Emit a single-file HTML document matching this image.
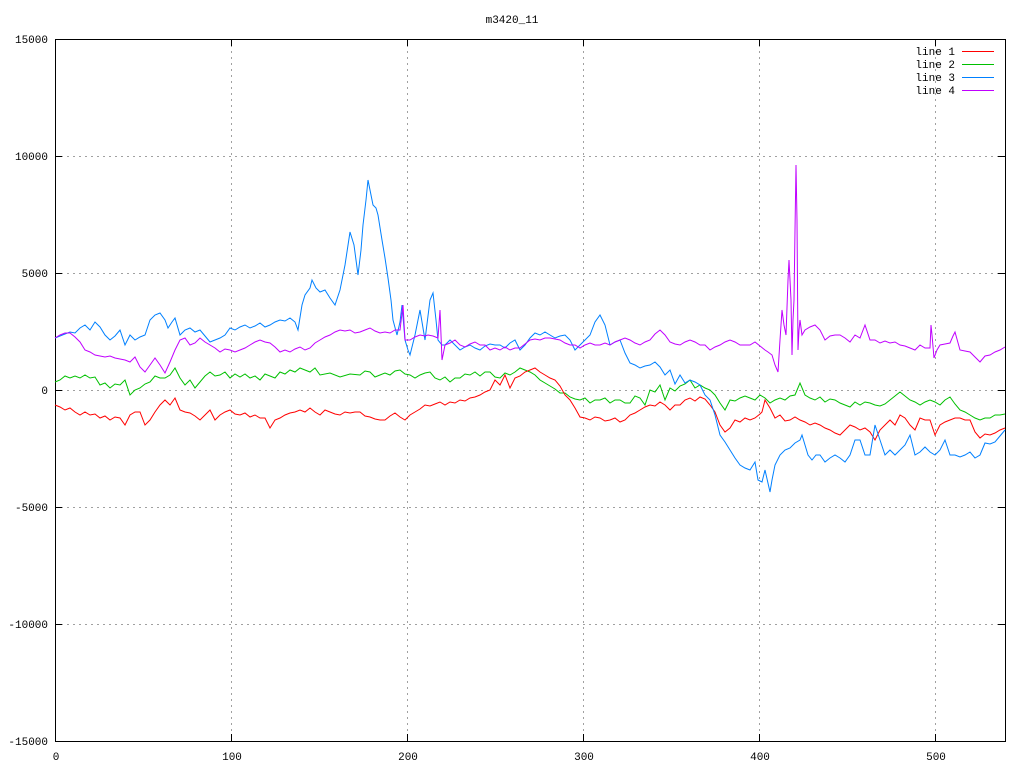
<!DOCTYPE html>
<html><head><style>html,body{margin:0;padding:0;background:#fff}svg{display:block}text{font-family:"Liberation Mono","DejaVu Sans Mono",monospace;font-size:11px;fill:#000}</style></head><body>
<svg width="1024" height="768" viewBox="0 0 1024 768" xmlns="http://www.w3.org/2000/svg">
<rect width="1024" height="768" fill="#fff"/>
<g stroke="#a0a0a0" stroke-width="1" stroke-dasharray="2,4" shape-rendering="crispEdges">
<line x1="55" y1="156.5" x2="1005" y2="156.5"/><line x1="55" y1="273.5" x2="1005" y2="273.5"/><line x1="55" y1="390.5" x2="1005" y2="390.5"/><line x1="55" y1="507.5" x2="1005" y2="507.5"/><line x1="55" y1="624.5" x2="1005" y2="624.5"/>
<line x1="231.5" y1="39" x2="231.5" y2="741"/><line x1="407.5" y1="39" x2="407.5" y2="741"/><line x1="583.5" y1="39" x2="583.5" y2="741"/><line x1="759.5" y1="39" x2="759.5" y2="741"/><line x1="935.5" y1="39" x2="935.5" y2="741"/>
</g>
<g stroke="#000" stroke-width="1" shape-rendering="crispEdges" fill="none">
<rect x="55.5" y="39.5" width="950" height="702"/>
<path d="M55 156.5h7M55 273.5h7M55 390.5h7M55 507.5h7M55 624.5h7M1005 156.5h-7M1005 273.5h-7M1005 390.5h-7M1005 507.5h-7M1005 624.5h-7M231.5 741v-7M407.5 741v-7M583.5 741v-7M759.5 741v-7M935.5 741v-7M231.5 39v7M407.5 39v7M583.5 39v7M759.5 39v7M935.5 39v7"/>
</g>
<g text-anchor="end">
<text x="48" y="43">15000</text><text x="48" y="160">10000</text><text x="48" y="277">5000</text><text x="48" y="394">0</text><text x="48" y="511">-5000</text><text x="48" y="628">-10000</text><text x="48" y="745">-15000</text>
</g>
<g text-anchor="middle">
<text x="56" y="760">0</text><text x="232" y="760">100</text><text x="408" y="760">200</text><text x="584" y="760">300</text><text x="760" y="760">400</text><text x="936" y="760">500</text>
<text x="512" y="23">m3420_11</text>
</g>
<g text-anchor="end">
<text x="955" y="55">line 1</text><text x="955" y="68">line 2</text><text x="955" y="81">line 3</text><text x="955" y="94">line 4</text>
</g>
<g stroke-width="1" fill="none">
<path d="M962 51.5h32" stroke="#f00"/><path d="M962 64.5h32" stroke="#00c000"/><path d="M962 77.5h32" stroke="#0080ff"/><path d="M962 90.5h32" stroke="#c000ff"/>
</g>
<g fill="none" stroke-width="1" stroke-linejoin="miter">
<polyline stroke="#00c000" points="55,382 60,380 65,376 70,378 75,376 80,378 85,375 90,378 95,377 100,385 105,383 110,388 115,384 120,385 125,380 130,395 135,390 140,388 145,384 150,382 155,376 160,378 165,378 170,375 175,368 180,378 185,385 190,380 195,388 200,382 205,376 210,372 215,376 220,375 225,372 230,378 235,374 240,377 245,374 250,378 255,376 260,380 265,374 270,376 275,378 280,372 285,374 290,370 295,372 300,368 305,370 310,372 315,368 320,375 330,373 340,377 350,374 360,375 365,371 370,372 375,377 380,375 385,373 390,375 395,371 400,370 405,374 410,375 415,378 420,375 425,373 430,372 435,378 440,380 445,377 450,382 455,378 460,378 465,374 470,375 475,372 480,376 485,372 490,372 495,377 500,378 505,373 510,375 515,372 520,368 525,370 530,372 535,375 540,380 545,383 550,386 555,389 560,393 565,393 570,397 575,399 580,400 585,398 590,403 595,400 600,400 605,398 610,403 615,400 620,400 625,403 630,403 635,396 640,398 645,405 650,390 655,392 660,385 665,400 670,388 675,391 680,386 685,384 690,380 695,388 700,385 705,388 710,390 715,395 720,403 725,410 730,400 735,401 740,398 745,396 750,398 755,400 760,395 765,398 770,403 775,400 780,398 785,400 790,396 795,395 800,383 805,395 810,398 815,400 820,397 825,402 830,399 835,400 840,403 845,405 850,407 855,402 860,405 865,402 870,403 875,405 880,406 885,404 890,400 895,396 900,392 905,396 910,400 915,402 920,405 925,402 930,400 935,402 940,405 945,400 950,397 955,404 960,410 965,412 970,415 975,418 980,420 985,418 990,418 995,415 1000,415 1005,414"/>
<polyline stroke="#f00" points="55,405 60,407 65,410 70,408 75,412 80,415 85,412 90,415 95,414 100,418 105,416 110,420 115,417 120,418 125,425 130,415 135,412 140,412 145,425 150,420 155,412 160,405 165,400 170,405 175,398 180,410 185,412 190,413 195,416 200,420 205,415 210,410 215,420 220,415 225,412 230,410 235,414 240,415 245,413 250,417 255,415 260,418 265,418 270,428 275,420 280,418 285,415 290,413 295,412 300,410 305,412 310,408 315,412 320,415 325,410 330,412 335,414 340,415 345,412 350,413 355,412 360,412 365,416 370,417 375,419 380,420 385,420 390,416 395,413 400,417 405,420 410,415 415,412 420,409 425,405 430,406 435,404 440,402 445,405 450,402 455,403 460,400 465,401 470,398 475,397 480,395 485,392 490,390 495,380 500,385 505,375 510,388 515,378 520,376 525,372 530,370 535,368 540,372 545,375 550,378 555,380 560,386 565,395 570,400 575,408 580,417 585,418 590,420 595,417 600,418 605,421 610,420 615,418 620,422 625,420 630,415 635,413 640,410 645,407 650,405 655,406 660,402 665,405 670,410 675,405 680,405 685,400 690,398 695,401 700,397 705,399 710,405 715,412 720,425 725,432 730,428 735,420 740,422 745,418 750,420 755,418 760,414 762,412 765,400 770,408 775,418 780,415 785,421 790,420 795,417 800,420 805,422 810,425 815,423 820,425 825,428 830,430 835,433 840,435 845,430 850,425 855,427 860,430 865,428 870,432 875,440 880,430 885,425 890,420 895,425 900,415 905,418 910,425 915,430 920,418 925,420 930,420 935,435 940,425 945,422 950,420 955,418 960,418 965,420 970,420 975,432 980,438 985,434 990,435 995,433 1000,430 1005,428"/>
<polyline stroke="#0080ff" points="55,338 60,336 65,334 70,332 75,333 80,328 85,325 90,330 95,322 100,327 105,335 110,340 115,336 120,330 125,345 130,335 135,340 140,337 145,335 150,320 155,315 160,313 165,320 168,328 172,322 175,318 180,335 185,330 190,328 195,332 200,330 205,336 210,342 215,340 220,338 225,335 230,328 235,330 240,327 245,325 250,328 255,326 260,323 265,327 270,325 275,322 280,320 285,321 290,318 295,322 298,330 302,305 305,295 310,288 312,280 316,288 320,292 325,290 330,298 335,305 340,290 345,265 350,232 354,245 356,260 358,275 361,250 363,225 366,200 368,180 371,195 373,205 376,208 378,215 382,240 385,258 388,278 391,300 393,320 397,335 400,322 402,305 405,340 408,350 410,355 415,335 420,310 425,340 430,300 433,293 436,320 438,340 442,345 445,345 450,340 455,345 460,350 465,347 470,345 475,348 480,350 485,346 490,344 495,345 500,345 505,348 510,343 515,340 520,350 525,345 530,338 535,333 540,335 545,332 550,335 555,338 560,336 565,335 570,340 575,350 580,345 585,340 590,335 595,322 600,315 605,325 610,345 615,342 620,340 625,353 630,363 635,365 640,368 645,366 650,365 655,362 660,367 665,375 670,370 675,384 680,375 685,383 690,380 695,382 700,385 705,395 710,400 715,415 720,435 725,442 730,450 735,458 740,465 745,468 750,470 755,462 758,480 762,482 765,470 770,492 772,480 775,465 780,455 785,450 790,448 795,443 800,440 802,435 805,445 808,455 812,460 816,455 820,455 825,462 830,458 835,455 840,458 845,462 850,455 855,440 860,440 865,455 870,455 875,425 880,440 885,455 890,450 895,455 900,450 905,445 910,435 915,455 920,452 925,447 930,452 935,455 940,450 945,440 950,455 955,455 960,457 965,455 970,452 975,458 980,455 985,443 990,444 995,442 1000,436 1005,430"/>
<polyline stroke="#c000ff" points="55,338 60,335 65,333 70,333 75,337 80,342 85,350 90,352 95,355 100,356 105,357 110,356 115,358 120,359 125,360 130,362 135,357 140,367 145,372 150,365 155,358 160,365 165,373 170,362 175,350 180,340 185,338 190,345 195,343 200,338 205,342 210,345 215,348 220,352 225,349 230,350 235,352 240,350 245,348 250,345 255,342 260,340 265,342 270,343 275,347 280,352 285,350 290,352 295,349 300,347 305,350 310,348 315,343 320,340 325,337 330,335 335,332 340,330 345,331 350,330 355,333 360,332 365,330 370,328 375,331 380,333 385,332 390,333 395,330 400,330 403,305 405,340 410,340 415,337 420,335 425,336 428,335 433,336 438,338 440,310 442,360 445,345 450,343 455,340 460,345 465,347 470,344 475,342 480,345 485,345 490,350 495,348 500,350 505,347 510,350 515,348 520,348 525,344 530,340 535,339 540,340 545,338 550,338 555,339 560,340 565,343 570,345 575,345 580,348 585,345 590,343 595,345 600,345 605,343 610,345 615,342 620,340 625,338 630,340 635,343 640,345 645,342 650,340 655,334 660,330 665,335 670,342 675,344 680,345 685,342 690,340 695,342 700,345 705,345 710,350 715,347 720,345 725,342 730,340 735,342 740,345 745,345 750,345 755,342 760,346 765,350 768,352 772,355 775,365 778,372 780,340 782,310 784,325 786,335 788,280 789,260 791,300 792,355 793,320 794,300 795,230 796,165 797,220 798,350 799,330 800,320 802,335 805,330 810,327 815,325 820,330 825,340 830,336 835,335 840,335 845,338 850,342 855,335 860,338 865,325 870,340 875,340 880,343 885,341 890,343 895,342 900,345 905,346 910,348 915,350 920,345 925,348 930,348 931,325 932,335 934,358 937,350 940,345 945,344 950,343 953,336 955,332 960,350 965,351 970,352 975,357 980,362 985,356 990,355 995,352 1000,350 1005,347"/>
</g>
</svg>
</body></html>
